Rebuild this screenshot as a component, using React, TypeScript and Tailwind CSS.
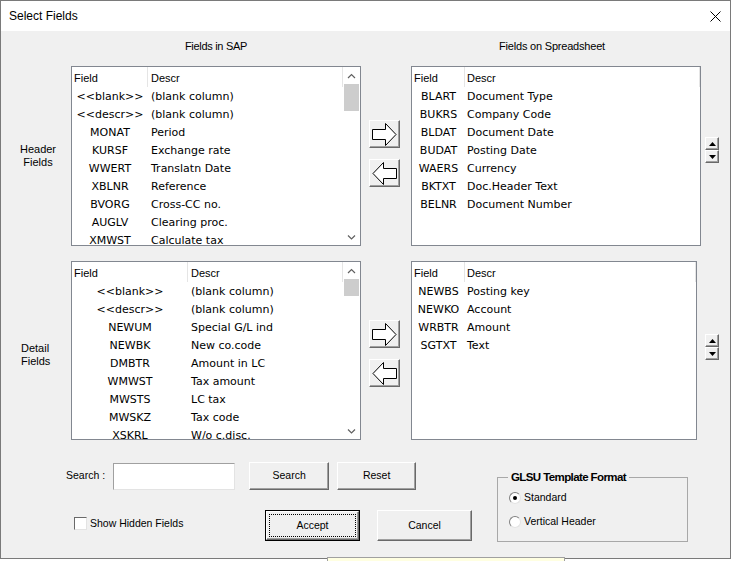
import type { ReactNode } from "react";

type Row = [string, string];

const sapHeader: Row[] = [
  ["<<blank>>", "(blank column)"],
  ["<<descr>>", "(blank column)"],
  ["MONAT", "Period"],
  ["KURSF", "Exchange rate"],
  ["WWERT", "Translatn Date"],
  ["XBLNR", "Reference"],
  ["BVORG", "Cross-CC no."],
  ["AUGLV", "Clearing proc."],
  ["XMWST", "Calculate tax"],
];

const sheetHeader: Row[] = [
  ["BLART", "Document Type"],
  ["BUKRS", "Company Code"],
  ["BLDAT", "Document Date"],
  ["BUDAT", "Posting Date"],
  ["WAERS", "Currency"],
  ["BKTXT", "Doc.Header Text"],
  ["BELNR", "Document Number"],
];

const sapDetail: Row[] = [
  ["<<blank>>", "(blank column)"],
  ["<<descr>>", "(blank column)"],
  ["NEWUM", "Special G/L ind"],
  ["NEWBK", "New co.code"],
  ["DMBTR", "Amount in LC"],
  ["WMWST", "Tax amount"],
  ["MWSTS", "LC tax"],
  ["MWSKZ", "Tax code"],
  ["XSKRL", "W/o c.disc."],
];

const sheetDetail: Row[] = [
  ["NEWBS", "Posting key"],
  ["NEWKO", "Account"],
  ["WRBTR", "Amount"],
  ["SGTXT", "Text"],
];

function Chevron({ down }: { down?: boolean }) {
  return (
    <svg width="9" height="6" viewBox="0 0 9 6">
      <polyline
        points={down ? "1,1.5 4.5,5 8,1.5" : "1,5 4.5,1.5 8,5"}
        fill="none"
        stroke="#606060"
        strokeWidth="1.2"
      />
    </svg>
  );
}

function ScrollBar({ thumb }: { thumb: string }) {
  return (
    <div className="flex w-[17px] shrink-0 flex-col bg-white">
      <div className="flex h-[17px] items-center justify-center">
        <Chevron />
      </div>
      <div className="flex-1">
        <div className={`mx-[1px] bg-[#cdcdcd] ${thumb}`} />
      </div>
      <div className="flex h-[17px] items-center justify-center">
        <Chevron down />
      </div>
    </div>
  );
}

function ListBox({
  rows,
  width,
  fieldCol,
  descrPad,
  scroll,
}: {
  rows: Row[];
  width: string;
  fieldCol: string;
  descrPad: string;
  scroll?: ReactNode;
}) {
  return (
    <div className={`flex h-full shrink-0 overflow-hidden border border-[#828790] bg-white ${width}`}>
      <div className="min-w-0 flex-1">
        <div className="flex h-[20px] text-[11px] leading-[22px]">
          <div className={`h-full shrink-0 border-r border-[#e5e5e5] pl-[2px] ${fieldCol}`}>Field</div>
          <div className={`h-full flex-1 border-r border-[#e5e5e5] ${descrPad}`}>Descr</div>
        </div>
        {rows.map(([f, d]) => (
          <div
            key={f}
            className="flex h-[18px] items-center whitespace-nowrap pt-[2px] font-['DejaVu_Sans',sans-serif] text-[11px]"
          >
            <div className={`shrink-0 text-center ${fieldCol}`}>{f}</div>
            <div className={descrPad}>{d}</div>
          </div>
        ))}
      </div>
      {scroll}
    </div>
  );
}

function Btn({ className, children }: { className: string; children: ReactNode }) {
  return (
    <button
      type="button"
      className={`flex shrink-0 items-center justify-center border border-t-white border-l-white border-r-[#696969] border-b-[#696969] bg-[#f0f0f0] shadow-[inset_-1px_-1px_0_#a0a0a0] ${className}`}
    >
      {children}
    </button>
  );
}

function Arrow({ left }: { left?: boolean }) {
  return (
    <svg width="25" height="23" viewBox="0 0 25 23" className={left ? "-scale-x-100" : ""}>
      <polygon
        points="0.5,6.5 13.5,6.5 13.5,0.5 24,11.5 13.5,22.5 13.5,16.5 0.5,16.5"
        fill="white"
        stroke="black"
        strokeWidth="1"
      />
    </svg>
  );
}

function ArrowButtons({ pad }: { pad: string }) {
  return (
    <div className={`flex w-[50px] shrink-0 flex-col gap-[11px] pl-[8px] ${pad}`}>
      <Btn className="h-[28px] w-[31px]">
        <Arrow />
      </Btn>
      <Btn className="h-[28px] w-[31px]">
        <Arrow left />
      </Btn>
    </div>
  );
}

function Spin({ pad }: { pad: string }) {
  return (
    <div className={`flex flex-col ${pad}`}>
      <Btn className="h-[13px] w-[14px]">
        <svg width="7" height="4" viewBox="0 0 7 4">
          <polygon points="0,4 3.5,0 7,4" fill="black" />
        </svg>
      </Btn>
      <Btn className="h-[13px] w-[14px]">
        <svg width="7" height="4" viewBox="0 0 7 4">
          <polygon points="0,0 3.5,4 7,0" fill="black" />
        </svg>
      </Btn>
    </div>
  );
}

function Radio({ checked, label }: { checked?: boolean; label: string }) {
  return (
    <div className="flex h-[24px] items-center">
      <div className="flex h-[12px] w-[12px] items-center justify-center rounded-full border border-t-[#808080] border-l-[#808080] border-r-[#e3e3e3] border-b-[#e3e3e3] bg-white">
        {checked && <div className="h-[4px] w-[4px] rounded-full bg-black" />}
      </div>
      <span className="ml-[3px]">{label}</span>
    </div>
  );
}

export default function App() {
  return (
    <div className="relative h-[561px] w-[732px] overflow-hidden bg-white font-['Liberation_Sans',Arial,sans-serif] text-[10.5px] text-black">
      <div className="flex h-[559px] w-[731px] flex-col border border-[#7a7a7a] bg-[#f0f0f0]">
        {/* Title bar */}
        <div className="flex h-[30px] shrink-0 items-center justify-between bg-white pl-[8px] pr-[9px] text-[12px]">
          <span>Select Fields</span>
          <svg width="11" height="11" viewBox="0 0 11 11">
            <path d="M0.5 0.5 L10.5 10.5 M10.5 0.5 L0.5 10.5" stroke="black" strokeWidth="1" />
          </svg>
        </div>

        {/* Column titles */}
        <div className="flex h-[35px] shrink-0 pt-[8px] text-[11px] leading-[14px]">
          <div className="w-[70px] shrink-0" />
          <div className="w-[290px] shrink-0 text-center tracking-[-0.3px]">Fields in SAP</div>
          <div className="w-[50px] shrink-0" />
          <div className="w-[290px] shrink-0 pr-[8px] text-center tracking-[-0.2px]">Fields on Spreadsheet</div>
        </div>

        {/* Header fields */}
        <div className="flex h-[180px] shrink-0">
          <div className="flex w-[70px] shrink-0 items-center justify-center pl-[4px] text-center text-[11px] leading-[13px]">
            Header
            <br />
            Fields
          </div>
          <ListBox
            rows={sapHeader}
            width="w-[290px]"
            fieldCol="w-[76px]"
            descrPad="pl-[3px]"
            scroll={<ScrollBar thumb="h-[27px]" />}
          />
          <ArrowButtons pad="pt-[54px]" />
          <ListBox rows={sheetHeader} width="w-[290px]" fieldCol="w-[53px]" descrPad="pl-[2px]" />
          <Spin pad="pl-[4px] pt-[71px]" />
        </div>

        {/* Detail fields */}
        <div className="mt-[15px] flex h-[179px] shrink-0">
          <div className="flex w-[70px] shrink-0 items-center pl-[20px] pt-[8px] text-[11px] leading-[13px]">
            Detail
            <br />
            Fields
          </div>
          <ListBox
            rows={sapDetail}
            width="w-[290px]"
            fieldCol="w-[116px]"
            descrPad="pl-[3px]"
            scroll={<ScrollBar thumb="h-[17px]" />}
          />
          <ArrowButtons pad="pt-[59px]" />
          <ListBox rows={sheetDetail} width="w-[286px]" fieldCol="w-[53px]" descrPad="pl-[2px]" />
          <Spin pad="pl-[8px] pt-[73px]" />
        </div>

        {/* Bottom controls */}
        <div className="flex flex-1">
          <div className="flex w-[496px] shrink-0 flex-col">
            <div className="mt-[22px] flex h-[28px] items-center">
              <span className="ml-[65px]">Search :</span>
              <div className="ml-[8px] h-[27px] w-[122px] border border-t-[#a0a0a0] border-l-[#a0a0a0] border-r-[#e3e3e3] border-b-[#e3e3e3] bg-white" />
              <Btn className="ml-[14px] h-[28px] w-[80px]">Search</Btn>
              <Btn className="ml-[8px] h-[28px] w-[79px]">Reset</Btn>
            </div>
            <div className="mt-[20px] flex h-[31px] items-center">
              <div className="-mt-[4px] flex w-[264px] shrink-0 items-center pl-[73px]">
                <div className="h-[13px] w-[13px] border border-t-[#696969] border-l-[#696969] border-r-[#e3e3e3] border-b-[#e3e3e3] bg-white" />
                <span className="ml-[3px]">Show Hidden Fields</span>
              </div>
              <button type="button" className="h-[31px] w-[95px] shrink-0 border border-black bg-[#f0f0f0]">
                <div className="h-full w-full border border-t-white border-l-white border-r-[#696969] border-b-[#696969] p-[2px] shadow-[inset_-1px_-1px_0_#a0a0a0]">
                  <div className="flex h-full w-full items-center justify-center border border-dotted border-black">
                    Accept
                  </div>
                </div>
              </button>
              <Btn className="ml-[17px] h-[31px] w-[95px]">Cancel</Btn>
            </div>
          </div>

          <fieldset className="mt-[30px] h-fit w-[191px] border border-[#a8a8a8] pb-[7px] pl-[11px] pt-[2px]">
            <legend className="-ml-[1px] px-[3px] text-[11.5px] font-bold leading-[14px] tracking-[-0.6px]">
              GLSU Template Format
            </legend>
            <Radio checked label="Standard" />
            <Radio label="Vertical Header" />
          </fieldset>
        </div>
      </div>

      {/* Tooltip peeking in at the bottom edge */}
      <div className="absolute left-[327px] top-[557px] h-[10px] w-[238px] border border-[#a0a0a0] bg-[#ffffe1]" />
    </div>
  );
}
